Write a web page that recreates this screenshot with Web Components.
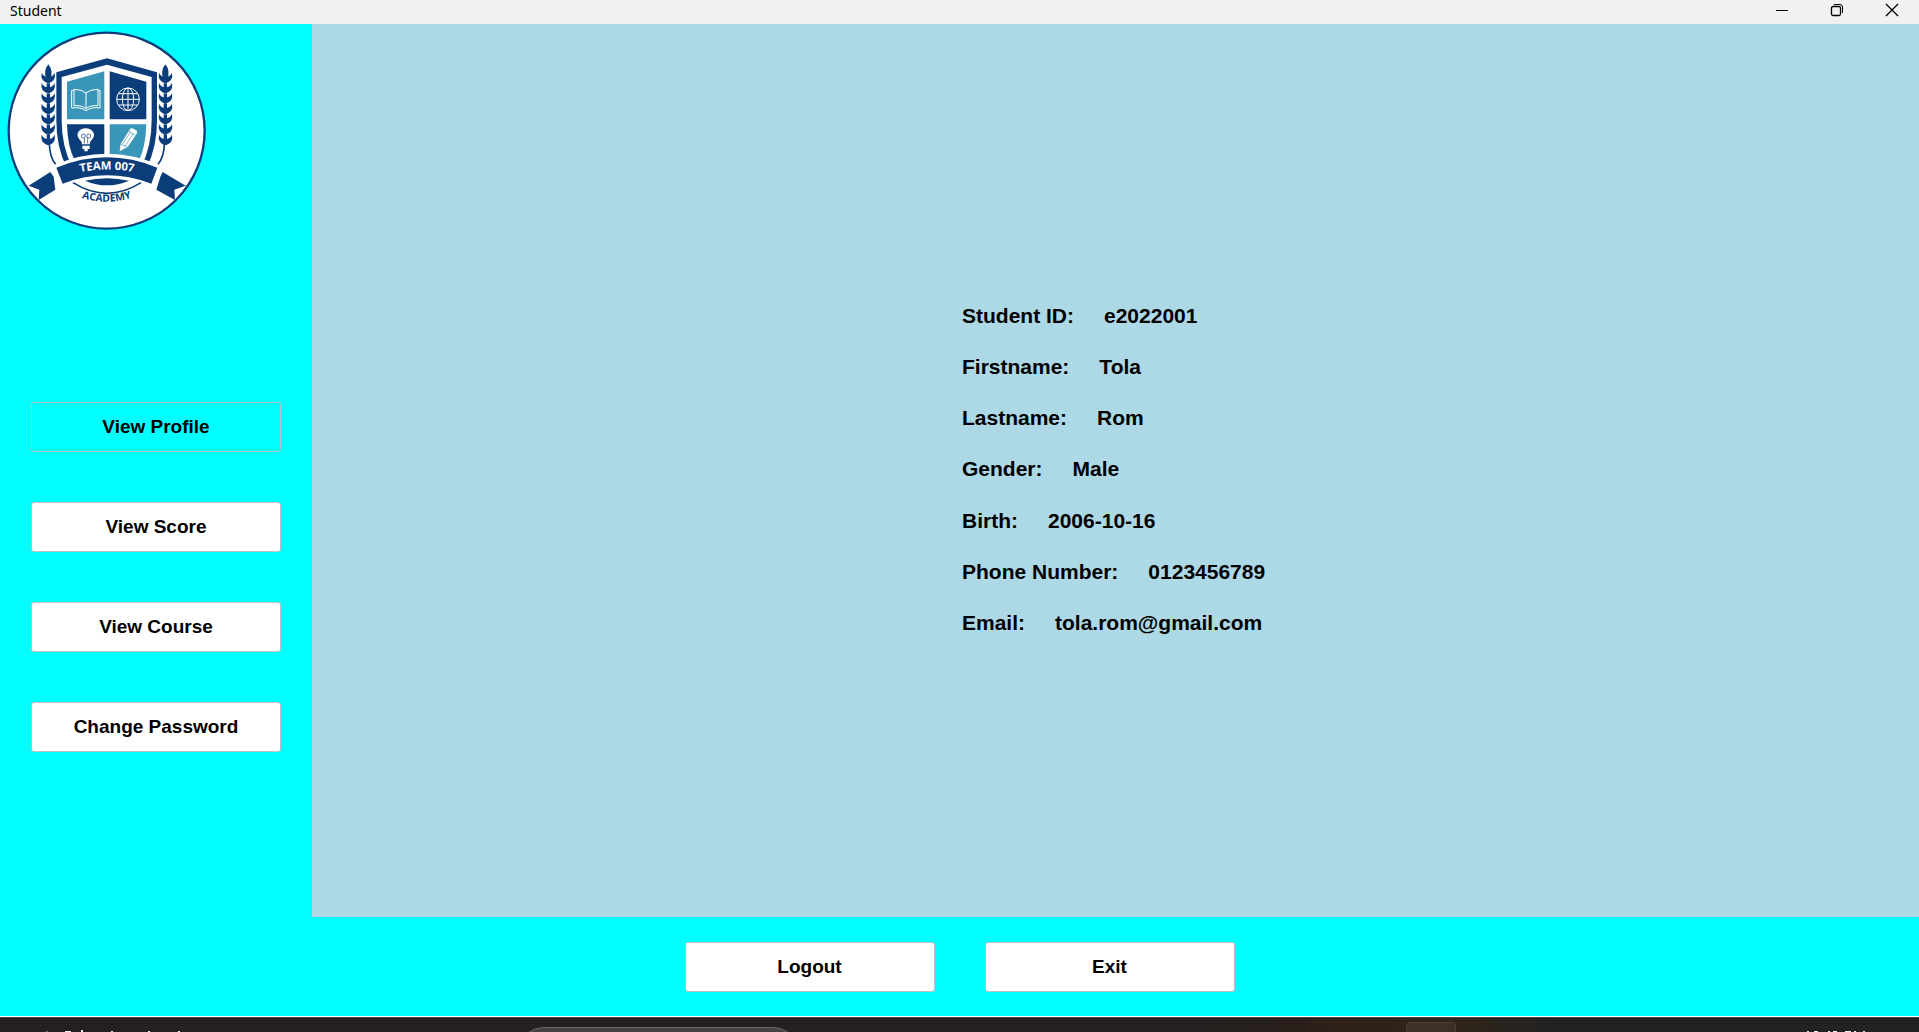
<!DOCTYPE html>
<html lang="en">
<head>
<meta charset="utf-8">
<title>Student</title>
<style>
html, body { margin: 0; height: 100%; overflow: hidden; }
body { font-family: "Liberation Sans", Arial, sans-serif; color: #000; }
</style>
</head>
<body>
<student-app></student-app>
<script>
const define = (name, html) => customElements.define(name, class extends HTMLElement {
  constructor() {
    super();
    this.attachShadow({ mode: 'open' }).innerHTML = html;
  }
});

define('title-bar', `
<style>
:host { display: flex; justify-content: space-between; height: 24px; background: #f1f1f1; font: 14px/22px "Noto Sans", sans-serif; }
span { padding-left: 10px; }
div { display: flex; }
button { width: 55px; height: 20px; padding: 0; border: 0; background: none; display: flex; align-items: center; justify-content: center; }
svg { width: 14px; height: 14px; fill: none; stroke: #000; stroke-width: 1; }
</style>
<span><slot></slot></span>
<div>
<button aria-label="Minimize"><svg viewBox="0 0 14 14"><path d="M1 7.5h12"/></svg></button>
<button aria-label="Restore"><svg viewBox="0 0 14 14"><rect x="1.5" y="3.5" width="9" height="9" rx="1.5" stroke-width="1.3"/><path d="M4 1.5h6q2.500 0 2.500 2.500v6"/></svg></button>
<button aria-label="Close"><svg viewBox="0 0 14 14"><path stroke-width="1.3" d="M1 1l12 12M13 1L1 13"/></svg></button>
</div>`);

let wheat = '<path d="M144 192q-16 20-6 44h12q10-24-6-44z"/>';
for (let y = 248; y <= 434; y += 31) {
  wheat += `<path d="M144 ${y}Q119 ${y - 6} 124 ${y - 31}Q131 ${y - 18} 142 ${y - 18}H146Q156 ${y - 18} 163 ${y - 31}Q168 ${y - 6} 144 ${y}z"/><path d="M139 ${y - 30}h10v30h-10z"/>`;
}
wheat += '<path d="M147 430Q148 470 166 492" fill="none" stroke="#0a3d7a" stroke-width="5"/>';

define('academy-logo', `
<style>
:host { display: block; width: 200px; height: 200px; }
svg { display: block; width: 100%; height: 100%; }
text { font-family: "Open Sans", sans-serif; font-weight: 700; }
</style>
<svg viewBox="20 92 600 600" fill="#0a3d7a" role="img" aria-label="Team 007 Academy">
<circle cx="319" cy="391" r="294" fill="#fff" stroke="#0a3d7a" stroke-width="7"/>
<g>${wheat}</g>
<g transform="translate(639 0) scale(-1 1)">${wheat}</g>
<path d="M320 174L470 216V360Q470 440 440 500H198Q168 440 168 360V216z"/>
<path d="M320 193L454 230V360Q454 440 422 500H216Q184 440 184 360V230z" fill="#fff"/>
<path d="M200 244L312 213V357H200z" fill="#3a96b8"/>
<path d="M328 213L438 244V357H328z"/>
<path d="M200 372H312V480H223Q202 440 200 372z"/>
<path d="M328 372H438Q436 440 416 480H328z" fill="#3a96b8"/>
<g fill="none" stroke="#fff" stroke-width="3">
<path d="M220 270H214V323Q240 319 257 331Q274 319 299 323V270H293" />
<path d="M221 267Q245 267 257 278Q269 267 293 267V316Q270 314 257 325Q244 314 221 316zM257 278V325"/>
<circle cx="383" cy="297" r="34"/>
<ellipse cx="383" cy="297" rx="17" ry="34"/>
<path d="M383 263V331M349 297H417M354 280H412M354 314H412"/>
</g>
<path d="M245 432Q244 423 237 417C224 402 236 384 256 384S289 402 276 417Q269 423 268 432z" fill="#fff"/>
<path d="M246 436h22v10h-6v7h-10v-7h-6z" fill="#fff"/>
<path d="M252 430V412M262 430V412" stroke="#0a3d7a" stroke-width="2"/>
<circle cx="249" cy="407" r="6" fill="none" stroke="#0a3d7a" stroke-width="2"/>
<circle cx="265" cy="407" r="6" fill="none" stroke="#0a3d7a" stroke-width="2"/>
<path d="M358 453L361 430L388 388Q392 382 399 385L407 390Q413 394 409 400L382 440z" fill="#fff"/>
<path d="M366 432L391 394M374 437L399 400M385 392L405 405M361 431L381 441" stroke="#3a96b8" stroke-width="2"/>
<path d="M158 496Q320 425 481 496L460 562Q320 500 179 562z" fill="#fff"/>
<path d="M168 502Q320 440 471 502L453 550Q320 500 187 550z"/>
<path d="M85 556L150 515L160 529L165 568L115 599L117 568z"/>
<path d="M556 556L487 515L480 529L468 568L524 599L522 568z"/>
<path d="M254 541Q320 526 386 541Q320 569 254 541z"/>
<path d="M218 547Q320 611 422 547" fill="none" stroke="#0a3d7a" stroke-width="5"/>
<path id="team" d="M190 527Q320 488 450 527" fill="none"/>
<path id="academy" d="M220 584Q319 624 418 584" fill="none"/>
<text font-size="34" fill="#fff" text-anchor="middle" xml:space="preserve"><textPath href="#team" startOffset="50%">TEAM 007</textPath></text>
<text font-size="31" text-anchor="middle"><textPath href="#academy" startOffset="50%">ACADEMY</textPath></text>
</svg>`);

define('menu-button', `
<style>
:host { display: block; width: 250px; height: 50px; }
button { width: 100%; height: 100%; padding: 0; border: 1px solid #c0c0c0; border-radius: 3px; background: #fff; color: #000; font: bold 19px/22px "Liberation Sans", Arial, sans-serif; }
:host([active]) button { background: #0ff; }
</style>
<button><slot></slot></button>`);

define('side-bar', `
<style>
:host { display: flex; flex-direction: column; width: 312px; box-sizing: border-box; padding: 7px; background: #0ff; }
nav { flex: 1; display: flex; flex-direction: column; align-items: center; justify-content: center; gap: 50px; padding-top: 13px; }
</style>
<academy-logo></academy-logo>
<nav><slot></slot></nav>`);

define('profile-row', `
<style>
:host { display: flex; align-items: center; gap: 30px; font: bold 21px/24px "Liberation Sans", Arial, sans-serif; white-space: nowrap; }
</style>
<slot name="label"></slot><slot></slot>`);

define('profile-panel', `
<style>
:host { flex: 1; display: flex; align-items: center; justify-content: center; padding-bottom: 2px; background: #add8e6; }
div { display: grid; grid-auto-rows: 1fr; min-width: 307px; height: 359px; }
</style>
<div><slot></slot></div>`);

define('action-bar', `
<style>
:host { display: flex; justify-content: center; gap: 50px; padding: 25px 0 24px; background: #0ff; border-bottom: 1px solid #fff; }
</style>
<slot></slot>`);

define('task-bar', `
<style>
:host { display: block; height: 15px; background: #23201f; }
svg { display: block; width: 100%; height: 15px; }
</style>
<svg viewBox="0 0 1919 15" preserveAspectRatio="none" aria-hidden="true">
<defs><linearGradient id="glow"><stop offset="0" stop-color="#2b1e1b" stop-opacity="0"/><stop offset=".35" stop-color="#2e2019"/><stop offset=".65" stop-color="#30251a"/><stop offset="1" stop-color="#222" stop-opacity="0"/></linearGradient></defs>
<path fill="#222" d="M1500 0h419v15h-419z"/>
<path fill="url(#glow)" d="M1200 0h400v15h-400z"/>
<path fill="#454241" d="M0 0h1919v1H0z"/>
<path fill="#434141" stroke="#6a6868" d="M528 16Q535 10.500 544 10.500H773Q782 10.500 789 16"/>
<path fill="#3c3128" stroke="#4b4033" d="M1406.500 16V9Q1406.500 5.500 1410 5.500H1452Q1455.500 5.500 1455.500 9V16"/>
<path fill="#5d6c8c" d="M46 14h2v1h-2z"/>
<path fill="#eee" d="M65 14h6v1h-6zM81 13h2v2h-2zM111 14h2v1h-2zM148 14h2v1h-2zM178 14h2v1h-2zM1807 14h2v1h-2zM1814 14h4v1h-4zM1828 14h2v1h-2zM1833 14h4v1h-4zM1845 14h6v1h-6zM1854 14h2v1h-2zM1863 14h2v1h-2z"/>
</svg>`);

define('student-app', `
<style>
:host { display: flex; flex-direction: column; height: 100vh; }
main { flex: 1; display: flex; min-height: 0; }
</style>
<title-bar>Student</title-bar>
<main>
<side-bar>
<menu-button active>View Profile</menu-button>
<menu-button>View Score</menu-button>
<menu-button>View Course</menu-button>
<menu-button>Change Password</menu-button>
</side-bar>
<profile-panel>
<profile-row><span slot="label">Student ID:</span><span>e2022001</span></profile-row>
<profile-row><span slot="label">Firstname:</span><span>Tola</span></profile-row>
<profile-row><span slot="label">Lastname:</span><span>Rom</span></profile-row>
<profile-row><span slot="label">Gender:</span><span>Male</span></profile-row>
<profile-row><span slot="label">Birth:</span><span>2006-10-16</span></profile-row>
<profile-row><span slot="label">Phone Number:</span><span>0123456789</span></profile-row>
<profile-row><span slot="label">Email:</span><span>tola.rom@gmail.com</span></profile-row>
</profile-panel>
</main>
<action-bar>
<menu-button>Logout</menu-button>
<menu-button>Exit</menu-button>
</action-bar>
<task-bar></task-bar>`);
</script>
</body>
</html></script>
